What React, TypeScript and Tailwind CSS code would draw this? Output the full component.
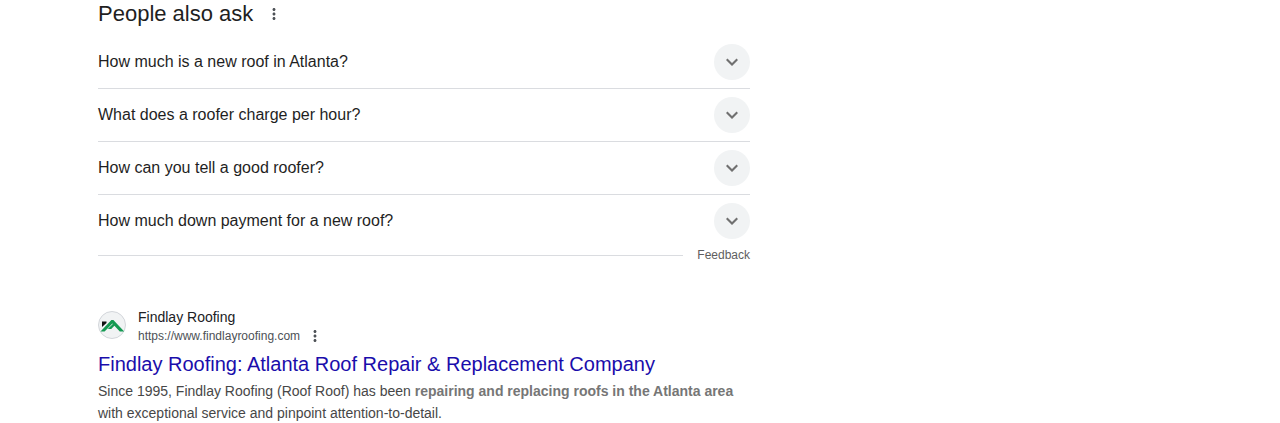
import { useState } from 'react'

const questions = [
  'How much is a new roof in Atlanta?',
  'What does a roofer charge per hour?',
  'How can you tell a good roofer?',
  'How much down payment for a new roof?',
]

function MoreIcon() {
  return (
    <svg viewBox="0 0 24 24" className="size-[18px]" fill="currentColor" aria-hidden="true">
      <path d="M12 8c1.1 0 2-.9 2-2s-.9-2-2-2-2 .9-2 2 .9 2 2 2zm0 2c-1.1 0-2 .9-2 2s.9 2 2 2 2-.9 2-2-.9-2-2-2zm0 6c-1.1 0-2 .9-2 2s.9 2 2 2 2-.9 2-2-.9-2-2-2z" />
    </svg>
  )
}

function ChevronIcon() {
  return (
    <svg viewBox="0 0 24 24" className="size-6" fill="currentColor" aria-hidden="true">
      <path d="M16.5 8.4L12 12.9 7.5 8.4 6 9.9l6 6 6-6z" />
    </svg>
  )
}

function RoofLogo() {
  return (
    <svg viewBox="0 0 28 28" className="size-7 shrink-0" aria-hidden="true">
      <circle cx="14" cy="14" r="13.5" fill="#f1f3f4" stroke="#d2d5da" />
      <path d="M4 10.5h4.5v1.5L4 16z" fill="#111" />
      <path
        d="M2.5 20.5L13.4 9h2L26.2 20.5h-4.4l-5.4-5.8-3.2 3.3H9.8l5-5-.4-.4-7.8 7.9z"
        fill="#159a52"
      />
    </svg>
  )
}

function Question({ text }: { text: string }) {
  const [open, setOpen] = useState(false)

  return (
    <li className="border-b border-[#dadce0] last:border-b-0">
      <button
        type="button"
        aria-expanded={open}
        onClick={() => setOpen(!open)}
        className="flex h-13 w-full cursor-pointer items-center justify-between text-left text-base text-[#1f1f1f]"
      >
        <span>{text}</span>
        <span className="flex size-9 items-center justify-center rounded-full bg-[#f1f3f4] text-[#707070]">
          <ChevronIcon />
        </span>
      </button>
    </li>
  )
}

function PeopleAlsoAsk() {
  return (
    <section>
      <div className="flex items-center gap-3">
        <h2 className="text-[22px] leading-7 text-[#1f1f1f]">People also ask</h2>
        <button type="button" aria-label="About this result" className="cursor-pointer text-[#4d5156]">
          <MoreIcon />
        </button>
      </div>
      <ul className="mt-2">
        {questions.map((question) => (
          <Question key={question} text={question} />
        ))}
      </ul>
      <div className="flex items-center gap-3.5">
        <hr className="grow border-[#dadce0]" />
        <a href="#" className="text-xs text-[#5e5e5e]">
          Feedback
        </a>
      </div>
    </section>
  )
}

function SearchResult() {
  return (
    <article className="mt-11">
      <div className="flex items-start gap-3">
        <div className="pt-1">
          <RoofLogo />
        </div>
        <div>
          <p className="text-sm leading-5 text-[#202124]">Findlay Roofing</p>
          <div className="flex items-center gap-1.5">
            <cite className="text-xs leading-[18px] text-[#4d5156] not-italic">
              https://www.findlayroofing.com
            </cite>
            <button type="button" aria-label="About this result" className="cursor-pointer text-[#4d5156]">
              <MoreIcon />
            </button>
          </div>
        </div>
      </div>
      <h3 className="mt-1.5 text-xl leading-[26px]">
        <a href="#" className="text-[#1a0dab] hover:underline">
          Findlay Roofing: Atlanta Roof Repair &amp; Replacement Company
        </a>
      </h3>
      <p className="mt-[3px] text-sm leading-[22px] text-[#474747]">
        Since 1995, Findlay Roofing (Roof Roof) has been{' '}
        <b className="text-[#767676]">repairing and replacing roofs in the Atlanta area</b> with
        exceptional service and pinpoint attention-to-detail.
      </p>
    </article>
  )
}

export default function App() {
  return (
    <main className="bg-white px-[98px] font-['Liberation_Sans',Arial,sans-serif]">
      <div className="max-w-[652px]">
        <PeopleAlsoAsk />
        <SearchResult />
      </div>
    </main>
  )
}
